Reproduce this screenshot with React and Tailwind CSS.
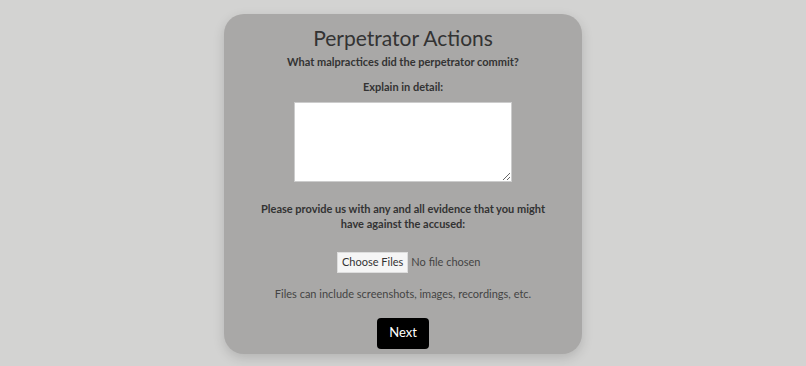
import React from 'react';

const font = { fontFamily: 'Lato, "Liberation Sans", sans-serif' };

const PerpetratorActions = () => {
  return (
    <div className="min-h-screen bg-[#d3d3d2] flex justify-center pt-[14px] pb-3" style={font}>
      <div className="w-[358px] h-[340px] bg-[#a9a8a7] rounded-[20px] shadow-[0_4px_12px_rgba(0,0,0,0.15)] flex flex-col items-center text-[#333]">
        <h1 className="mt-[11px] text-[21px] leading-[26px] text-[#333]">Perpetrator Actions</h1>
        <p className="mt-[4px] text-[11px] font-bold leading-[14px]">What malpractices did the perpetrator commit?</p>
        <p className="mt-[11px] text-[11px] font-bold leading-[14px]">Explain in detail:</p>
        <textarea className="mt-[8px] w-[218px] h-[80px] bg-white border border-[#ccc] resize-y outline-none"></textarea>
        <p className="mt-[19px] w-[300px] text-center text-[11px] font-bold leading-[15px]">
          Please provide us with any and all evidence that you might have against the accused:
        </p>
        <input
          type="file"
          multiple
          className="mt-[21px] ml-[28px] w-[160px] text-[11px] text-[#444] file:mr-[3px] file:bg-[#f5f5f5] file:border file:border-[#ddd] file:px-[4px] file:py-[1px] file:text-[11px] file:text-[#333]"
          style={font}
        />
        <p className="mt-[14px] text-[11px] text-[#444] leading-[14px]">Files can include screenshots, images, recordings, etc.</p>
        <button className="mt-[17px] w-[52px] h-[31px] bg-black text-white text-[13px] rounded-[4px]">Next</button>
      </div>
    </div>
  );
};

export default function App() {
  return <PerpetratorActions />;
}
